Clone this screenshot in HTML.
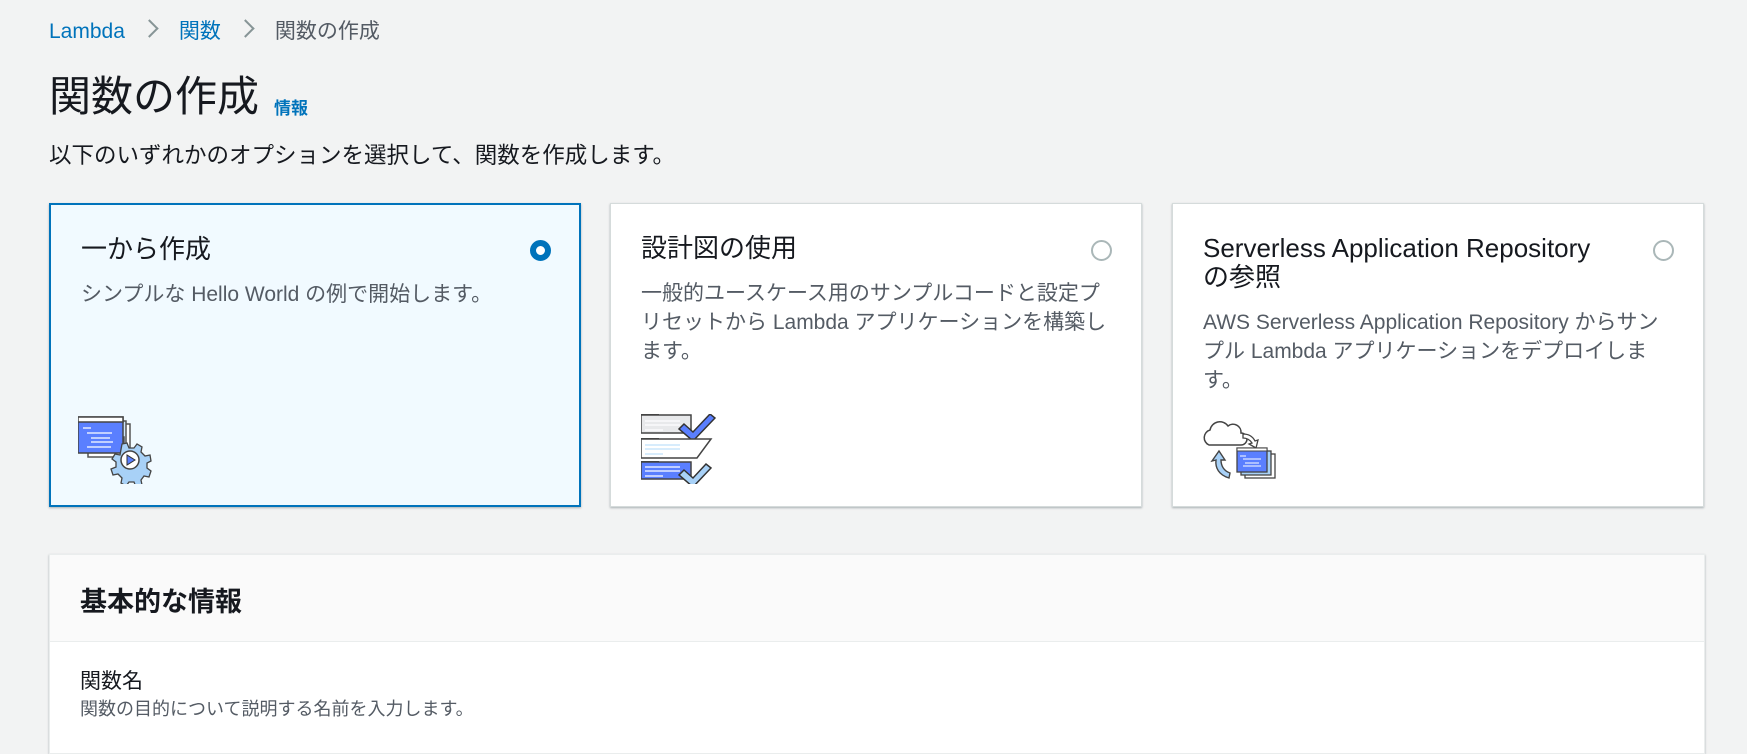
<!DOCTYPE html>
<html><head><meta charset="utf-8"><style>
*{box-sizing:border-box;margin:0;padding:0}
body{width:1747px;height:713px;overflow:hidden;background:#f2f3f3;font-family:"Liberation Sans","Noto Sans CJK JP",sans-serif;color:#16191f;position:relative}
.a{position:absolute;white-space:nowrap}
.bc{top:15px;left:49px;font-size:21px;color:#545b64}
.bc a{color:#0073bb;text-decoration:none}
.sep{display:inline-block;width:13px;height:13px;border-right:2px solid #879596;border-top:2px solid #879596;transform:rotate(45deg);margin:0 23px 3px 18px}
.card{position:absolute;top:203px;height:304px;width:532px;background:#fff;border:1px solid #d5dbdb;box-shadow:0 1px 2px rgba(0,28,36,.3)}
.card.sel{background:#f1faff;border:2px solid #0073bb}
.ct{position:absolute;left:30px;top:30px;font-size:26px;line-height:29px;color:#16191f}
.cd{position:absolute;left:30px;font-size:21px;line-height:29px;color:#545b64;width:468px}
.radio{position:absolute;right:29px;top:36px;width:21px;height:21px;border-radius:50%;border:2px solid #aab7b8;background:#fff}
.sel .radio{border:6px solid #0073bb;right:28px;top:35px}
.panel{position:absolute;left:49px;top:554px;width:1656px;height:200px;background:#fff;border:1px solid #eaeded;box-shadow:0 1px 2px rgba(0,28,36,.3)}
.ph{height:87px;background:#fafafa;border-bottom:1px solid #eaeded;padding:25px 30px;font-size:27px;font-weight:bold}
</style></head><body>
<div class="a bc"><a>Lambda</a><span class="sep"></span><a>関数</a><span class="sep"></span>関数の作成</div>
<div class="a" style="left:49px;top:72px;font-size:42px;line-height:50px">関数の作成</div>
<div class="a" style="left:274px;top:94px;font-size:17px;font-weight:bold;color:#0073bb">情報</div>
<div class="a" style="left:49px;top:142px;font-size:22.5px;line-height:28px">以下のいずれかのオプションを選択して、関数を作成します。</div>

<div class="card sel" style="left:49px">
<div class="ct">一から作成</div>
<div class="cd" style="top:75px">シンプルな Hello World の例で開始します。</div>
<div class="radio"></div>
<svg style="position:absolute;left:27px;top:209px" width="80" height="70" viewBox="0 0 80 70">
<rect x="30" y="10" width="22" height="30" fill="#fff" stroke="#555" stroke-width="1.5"/>
<rect x="26" y="7" width="22" height="30" fill="#cfe6fb" stroke="#555" stroke-width="1.5"/>
<rect x="10" y="23" width="36" height="20" fill="#fff" stroke="#555" stroke-width="1.5"/>
<rect x="0" y="3" width="45" height="36" fill="#5a7fff" stroke="#444" stroke-width="1.5"/>
<rect x="0" y="3" width="45" height="5" fill="#fff" stroke="#444" stroke-width="1.5"/>
<path d="M5 14h8M9 19h25M13 24h19M13 28h22M9 33h24" stroke="#fff" stroke-width="1.2"/>
<path d="M44 30l5-1 2 5 5 0 3-4 5 3-1 5 4 4 5-1 1 6-4 2v5l4 3-2 6-5-1-3 4 1 5-6 2-2-5h-5l-3 4-5-3 1-5-4-4-5 1-2-6 5-2v-5l-4-3 3-5 5 1z" fill="#a8d1f7" stroke="#444" stroke-width="1.3"/>
<circle cx="52" cy="46" r="9" fill="#fff" stroke="#444" stroke-width="1.5"/>
<path d="M49 41v10l8-5z" fill="#5a7fff" stroke="#333" stroke-width="1"/>
</svg>
</div>

<div class="card" style="left:610px">
<div class="ct">設計図の使用</div>
<div class="cd" style="top:75px">一般的ユースケース用のサンプルコードと設定プリセットから Lambda アプリケーションを構築します。</div>
<div class="radio"></div>
<svg style="position:absolute;left:30px;top:210px" width="75" height="70" viewBox="0 0 75 70">
<rect x="0" y="0" width="18" height="2" fill="#444"/><rect x="0" y="1" width="50" height="18" fill="#e8e9eb" stroke="#444" stroke-width="1.5"/>
<path d="M4 7h35M4 11h35M4 16h18" stroke="#fff" stroke-width="1.3"/>
<path d="M43 10l9 8 17-18 5 4-22 23-14-12z" fill="#5a7fff" stroke="#333" stroke-width="1.5"/>
<rect x="0" y="24" width="18" height="2" fill="#444"/><path d="M0 25h70l-14 19H0z" fill="#fff" stroke="#444" stroke-width="1.5"/>
<path d="M4 31h35M4 35h35M4 40h18" stroke="#bfe0fb" stroke-width="1.3"/>
<rect x="0" y="47" width="18" height="2" fill="#444"/><rect x="0" y="48" width="50" height="17" fill="#5a7fff" stroke="#444" stroke-width="1.5"/>
<path d="M4 53h35M4 57h35M4 62h18" stroke="#fff" stroke-width="1.3"/>
<path d="M43 56l9 8 13-14 5 4-18 19-14-12z" fill="#a8d1f7" stroke="#333" stroke-width="1.5"/>
</svg>
</div>

<div class="card" style="left:1172px">
<div class="ct">Serverless Application Repository<br>の参照</div>
<div class="cd" style="top:104px">AWS Serverless Application Repository からサンプル Lambda アプリケーションをデプロイします。</div>
<div class="radio"></div>
<svg style="position:absolute;left:30px;top:210px" width="75" height="70" viewBox="0 0 75 70">
<path d="M6 31h32a6 6 0 0 0 0-12 8 8 0 0 0-13-7 10 10 0 0 0-18 4 8 8 0 0 0-1 15z" fill="#fff" stroke="#444" stroke-width="1.5"/>
<path d="M40 20c6 0 10 3 12 7l3-1-2 8-7-4 3-1c-2-3-5-5-9-5z" fill="#fff" stroke="#444" stroke-width="1.3"/>
<path d="M26 64c-10-3-14-10-13-18l-4 1 7-10 6 9-4 0c0 6 3 11 9 13z" fill="#a8d1f7" stroke="#444" stroke-width="1.4"/>
<rect x="42" y="40" width="30" height="24" fill="#fff" stroke="#444" stroke-width="1.3"/>
<rect x="38" y="37" width="30" height="24" fill="#a8d1f7" stroke="#444" stroke-width="1.3"/>
<rect x="34" y="34" width="30" height="24" fill="#5a7fff" stroke="#444" stroke-width="1.3"/>
<rect x="34" y="34" width="30" height="3" fill="#fff" stroke="#444" stroke-width="1"/>
<path d="M37 42h6M40 45h18M42 49h14M40 52h18" stroke="#fff" stroke-width="1"/>
</svg>
</div>

<div class="panel">
<div class="ph">基本的な情報</div>
<div class="a" style="left:30px;top:110px;font-size:21px">関数名</div>
<div class="a" style="left:30px;top:140px;font-size:18px;color:#545b64">関数の目的について説明する名前を入力します。</div>
</div>
</body></html>
